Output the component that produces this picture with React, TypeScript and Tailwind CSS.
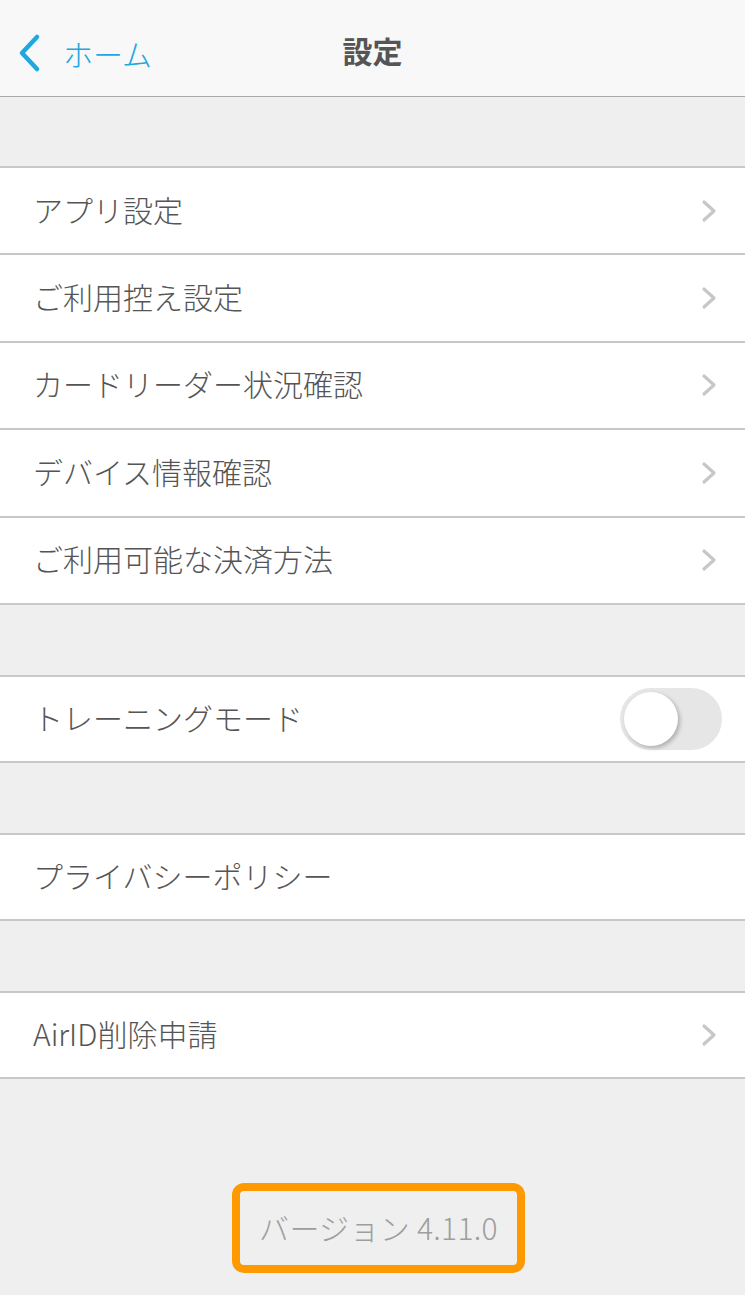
import React, { useState } from "react";

type Row = { label: string; chevron?: boolean; toggle?: boolean };

const groups: Row[][] = [
  [
    { label: "アプリ設定", chevron: true },
    { label: "ご利用控え設定", chevron: true },
    { label: "カードリーダー状況確認", chevron: true },
    { label: "デバイス情報確認", chevron: true },
    { label: "ご利用可能な決済方法", chevron: true },
  ],
  [{ label: "トレーニングモード", toggle: true }],
  [{ label: "プライバシーポリシー" }],
  [{ label: "AirID削除申請", chevron: true }],
];

function Chevron() {
  return (
    <svg width="18" height="26" viewBox="0 0 18 26" className="mr-[27px]">
      <path d="M4 4 L14 13 L4 22" fill="none" stroke="#c7c7c7" strokeWidth="3.2" strokeLinecap="round" strokeLinejoin="round" />
    </svg>
  );
}

function Toggle() {
  const [on, setOn] = useState(false);
  return (
    <button
      onClick={() => setOn(!on)}
      className={`mr-[23px] relative w-[102px] h-[62px] rounded-full border-2 ${
        on ? "bg-[#4cd964] border-[#4cd964]" : "bg-[#e6e6e6] border-[#e6e6e6]"
      }`}
    >
      <span
        className={`absolute top-[2px] w-[54px] h-[54px] rounded-full bg-white shadow-[2px_2px_4px_rgba(0,0,0,0.25)] ${
          on ? "left-[42px]" : "left-[2px]"
        }`}
      />
    </button>
  );
}

export default function App() {
  return (
    <div
      className="w-[745px] h-[1295px] bg-[#efefef] flex flex-col overflow-hidden"
      style={{ fontFamily: '"Noto Sans CJK JP", "Noto Sans", sans-serif' }}
    >
      {/* HEADER */}
      <header className="h-[97px] shrink-0 bg-[#f8f8f8] border-b border-[#aaaaaa] relative flex items-center justify-center">
        <div className="absolute left-[17px] top-[33px] flex items-center">
          <svg width="26" height="40" viewBox="0 0 26 40">
            <path d="M20 4 L5 20 L20 36" fill="none" stroke="#1ea7e1" strokeWidth="4.5" strokeLinecap="round" strokeLinejoin="round" />
          </svg>
          <span className="ml-[20px] text-[30px] font-light text-[#1ea7e1] leading-none">ホーム</span>
        </div>
        <h1 className="text-[30px] font-bold text-[#555555] leading-none mt-[4px]">設定</h1>
      </header>

      {/* GROUPS */}
      <div className="flex flex-col gap-[70px] pt-[69px]">
        {groups.map((group, gi) => (
          <section key={gi} className="border-t-2 border-[#c8c8c8] bg-white">
            {group.map((row) => (
              <div
                key={row.label}
                className={`${
                  group.length > 1 ? "h-[87.4px]" : "h-[86px]"
                } border-b-2 border-[#c8c8c8] flex items-center justify-between pl-[33px]`}
              >
                <span className="text-[30px] font-light text-[#555555] leading-none -mt-[4px]">{row.label}</span>
                {row.chevron && <Chevron />}
                {row.toggle && <Toggle />}
              </div>
            ))}
          </section>
        ))}
      </div>

      {/* VERSION */}
      <div className="flex pl-[232px] mt-[104px]">
        <div className="w-[293px] h-[90px] border-[8px] border-[#ff9900] rounded-[12px] flex items-center justify-center">
          <span className="text-[30px] font-light text-[#9e9e9e] leading-none -mt-[2px] tracking-[0.3px]">バージョン 4.11.0</span>
        </div>
      </div>
    </div>
  );
}
